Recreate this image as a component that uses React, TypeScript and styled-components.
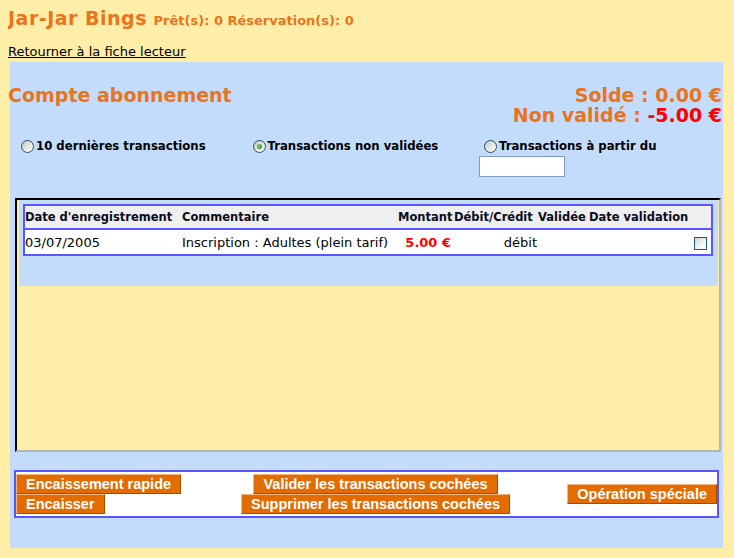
import React from "react";
import styled, { createGlobalStyle } from "styled-components";

const ORANGE = "#e8741c";
const PANEL_BLUE = "#c4dcfc";
const PAGE_YELLOW = "#ffeea8";
const LINE_BLUE = "#5a55ff";

const GlobalStyle = createGlobalStyle`
  html, body { padding: 0; }
  body {
    margin: 8px;
    background: ${PAGE_YELLOW};
    font-family: "DejaVu Sans", Verdana, sans-serif;
    color: #000;
  }
`;

const TopTitle = styled.h1`
  margin: 0;
  height: 21px;
  font-size: 19px;
  line-height: 21px;
  font-weight: bold;
  color: ${ORANGE};
  white-space: nowrap;
`;

const ReaderName = styled.span`
  letter-spacing: 0.5px;
`;

const Counts = styled.span`
  font-size: 13px;
  line-height: 14px;
`;

const LinkRow = styled.div`
  margin-top: 15px;
  height: 15px;
  font-size: 13px;
  line-height: 15px;
  a {
    color: #000;
    text-decoration: underline;
  }
`;

const Panel = styled.div`
  margin: 3px 0 0 2px;
  width: 713px;
  background: ${PANEL_BLUE};
  padding: 23px 0 30px 0;
  box-sizing: border-box;
`;

const HeaderRow = styled.div`
  display: flex;
  justify-content: space-between;
  align-items: flex-start;
  margin-left: -2px;
  padding-right: 1px;
`;

const SectionTitle = styled.h2`
  margin: 0;
  font-size: 19px;
  line-height: 20px;
  font-weight: bold;
  color: ${ORANGE};
`;

const Balance = styled.div`
  text-align: right;
  font-size: 19px;
  line-height: 20px;
  font-weight: bold;
  color: ${ORANGE};
  white-space: nowrap;
`;

const Negative = styled.span`
  color: #ff0000;
`;

const RadioGrid = styled.div`
  display: grid;
  grid-template-columns: repeat(3, 231.5px);
  grid-template-rows: 16px 21px;
  row-gap: 2px;
  margin-top: 13px;
  padding-left: 6px;
`;

const RadioLabel = styled.label`
  display: flex;
  align-items: center;
  height: 16px;
  font-size: 11.7px;
  line-height: 16px;
  font-weight: bold;
  white-space: nowrap;
`;

const RadioDot = styled.span<{ $checked?: boolean }>`
  position: relative;
  display: inline-block;
  width: 13px;
  height: 13px;
  box-sizing: border-box;
  margin: 0 2px 0 5px;
  border-radius: 50%;
  border: 1px solid #2a4d6e;
  background: linear-gradient(135deg, #c4c4bc 0%, #e6e6e2 50%, #ffffff 100%);
  &::after {
    content: "";
    display: ${(p) => (p.$checked ? "block" : "none")};
    position: absolute;
    left: 3px;
    top: 3px;
    width: 5px;
    height: 5px;
    border-radius: 50%;
    background: radial-gradient(circle at 40% 40%, #7fd07f 0%, #2e9a2e 70%);
  }
`;

const DateInput = styled.input`
  grid-column: 3;
  grid-row: 2;
  width: 86px;
  height: 21px;
  box-sizing: border-box;
  margin: 0;
  padding: 0 2px;
  border: 1px solid #7f9db9;
  background: #fff;
`;

const Frame = styled.div`
  margin: 21px 2px 0 5px;
  height: 254px;
  box-sizing: border-box;
  border-width: 2px;
  border-style: solid;
  border-color: #000 #b4b4b4 #b4b4b4 #000;
  background: ${PAGE_YELLOW};
`;

const TableArea = styled.div`
  margin: 0 1px 0 2px;
  padding: 4px 5px 30px 4px;
  background: ${PANEL_BLUE};
`;

const Table = styled.table`
  width: 690px;
  table-layout: fixed;
  border-collapse: separate;
  border-spacing: 0;
  border: 2px solid ${LINE_BLUE};
  font-size: 13px;
`;

const Th = styled.th`
  box-sizing: border-box;
  height: 24px;
  padding: 0 1px 0 0;
  text-align: left;
  font-size: 11.5px;
  font-weight: bold;
  color: #0a0a20;
  background: #efefef;
  border-bottom: 2px solid ${LINE_BLUE};
  white-space: nowrap;
  overflow: visible;
`;

const Td = styled.td<{ $align?: string; $pr?: number }>`
  box-sizing: border-box;
  height: 24px;
  padding: 0 ${(p) => p.$pr ?? 1}px 0 0;
  text-align: ${(p) => p.$align ?? "left"};
  background: #fff;
  white-space: nowrap;
  vertical-align: middle;
`;

const Amount = styled.span`
  color: #ff0000;
  font-weight: bold;
`;

const CheckBox = styled.span`
  display: inline-block;
  width: 13px;
  height: 13px;
  box-sizing: border-box;
  vertical-align: middle;
  border: 1px solid #1c5878;
  background: linear-gradient(135deg, #d4d4cc 0%, #f4f4f2 60%, #ffffff 100%);
`;

const ButtonBox = styled.div`
  margin: 18px 4px 0 4px;
  border: 2px solid ${LINE_BLUE};
  background: #fff;
  padding: 2px 0;
  display: grid;
  grid-template-columns: 226px 267px 1fr;
`;

const ButtonCol = styled.div<{ $align: string }>`
  display: flex;
  flex-direction: column;
  justify-content: center;
  align-items: ${(p) => p.$align};
`;

const ActionButton = styled.button`
  height: 20px;
  box-sizing: border-box;
  margin: 0;
  padding: 0 9px;
  border: 1px solid;
  border-color: #f5b77c #a24f00 #a24f00 #f5b77c;
  background: #e26c00;
  color: #fff;
  font-family: "Liberation Sans", Arial, sans-serif;
  font-weight: bold;
  font-size: 14.5px;
  line-height: 18px;
  white-space: nowrap;
  cursor: pointer;
`;

export default function App() {
  return (
    <>
      <GlobalStyle />
      <TopTitle>
        <ReaderName>Jar-Jar Bings</ReaderName> <Counts>Prêt(s): 0 Réservation(s): 0</Counts>
      </TopTitle>
      <LinkRow>
        <a href="#">Retourner à la fiche lecteur</a>
      </LinkRow>
      <Panel>
        <HeaderRow>
          <SectionTitle>Compte abonnement</SectionTitle>
          <Balance>
            Solde : 0.00 €
            <br />
            Non validé : <Negative>-5.00 €</Negative>
          </Balance>
        </HeaderRow>
        <RadioGrid>
          <RadioLabel>
            <RadioDot />
            10 dernières transactions
          </RadioLabel>
          <RadioLabel>
            <RadioDot $checked />
            Transactions non validées
          </RadioLabel>
          <RadioLabel>
            <RadioDot />
            Transactions à partir du
          </RadioLabel>
          <DateInput type="text" />
        </RadioGrid>
        <Frame>
          <TableArea>
            <Table>
              <colgroup>
                <col style={{ width: 157 }} />
                <col style={{ width: 216 }} />
                <col style={{ width: 56 }} />
                <col style={{ width: 84 }} />
                <col style={{ width: 51 }} />
                <col style={{ width: 102 }} />
                <col style={{ width: 20 }} />
              </colgroup>
              <thead>
                <tr>
                  <Th>Date d'enregistrement</Th>
                  <Th>Commentaire</Th>
                  <Th>Montant</Th>
                  <Th>Débit/Crédit</Th>
                  <Th>Validée</Th>
                  <Th>Date validation</Th>
                  <Th></Th>
                </tr>
              </thead>
              <tbody>
                <tr>
                  <Td>03/07/2005</Td>
                  <Td>Inscription : Adultes (plein tarif)</Td>
                  <Td $align="right" $pr={3}>
                    <Amount>5.00 €</Amount>
                  </Td>
                  <Td $align="right">débit</Td>
                  <Td></Td>
                  <Td></Td>
                  <Td $align="center">
                    <CheckBox />
                  </Td>
                </tr>
              </tbody>
            </Table>
          </TableArea>
        </Frame>
        <ButtonBox>
          <ButtonCol $align="flex-start">
            <ActionButton>Encaissement rapide</ActionButton>
            <ActionButton>Encaisser</ActionButton>
          </ButtonCol>
          <ButtonCol $align="center">
            <ActionButton>Valider les transactions cochées</ActionButton>
            <ActionButton>Supprimer les transactions cochées</ActionButton>
          </ButtonCol>
          <ButtonCol $align="flex-end">
            <ActionButton>Opération spéciale</ActionButton>
          </ButtonCol>
        </ButtonBox>
      </Panel>
    </>
  );
}
